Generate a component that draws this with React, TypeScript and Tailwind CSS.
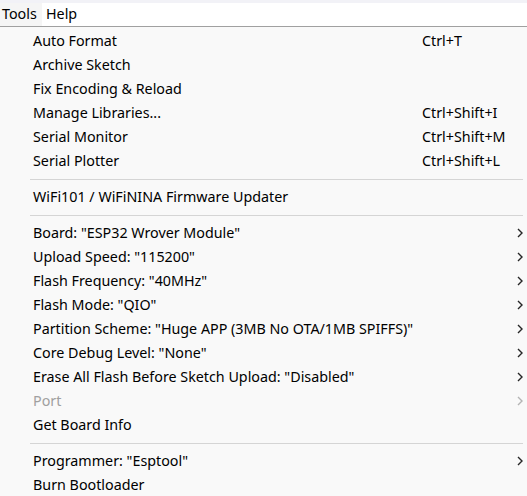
import React from "react";

type Item =
  | { type: "sep" }
  | { type: "item"; label: string; shortcut?: string; sub?: boolean; disabled?: boolean };

const items: Item[] = [
  { type: "item", label: "Auto Format", shortcut: "Ctrl+T" },
  { type: "item", label: "Archive Sketch" },
  { type: "item", label: "Fix Encoding & Reload" },
  { type: "item", label: "Manage Libraries...", shortcut: "Ctrl+Shift+I" },
  { type: "item", label: "Serial Monitor", shortcut: "Ctrl+Shift+M" },
  { type: "item", label: "Serial Plotter", shortcut: "Ctrl+Shift+L" },
  { type: "sep" },
  { type: "item", label: "WiFi101 / WiFiNINA Firmware Updater" },
  { type: "sep" },
  { type: "item", label: 'Board: "ESP32 Wrover Module"', sub: true },
  { type: "item", label: 'Upload Speed: "115200"', sub: true },
  { type: "item", label: 'Flash Frequency: "40MHz"', sub: true },
  { type: "item", label: 'Flash Mode: "QIO"', sub: true },
  { type: "item", label: 'Partition Scheme: "Huge APP (3MB No OTA/1MB SPIFFS)"', sub: true },
  { type: "item", label: 'Core Debug Level: "None"', sub: true },
  { type: "item", label: 'Erase All Flash Before Sketch Upload: "Disabled"', sub: true },
  { type: "item", label: "Port", sub: true, disabled: true },
  { type: "item", label: "Get Board Info" },
  { type: "sep" },
  { type: "item", label: 'Programmer: "Esptool"', sub: true },
  { type: "item", label: "Burn Bootloader" },
];

function Chevron({ disabled }: { disabled?: boolean }) {
  return (
    <svg width="6" height="10" viewBox="0 0 6 10" className="shrink-0">
      <path
        d="M1 1 L5 5 L1 9"
        fill="none"
        stroke={disabled ? "#b4b4b4" : "#262626"}
        strokeWidth="1.4"
      />
    </svg>
  );
}

export default function App() {
  return (
    <div
      className="w-[527px] h-[496px] overflow-hidden bg-[#f9f9f9] text-[14.3px] text-black"
      style={{ fontFamily: '"Noto Sans", "Open Sans", sans-serif' }}
    >
      <div className="h-[3px] bg-[#f2f2f7]" />
      <div className="h-[23px] bg-white flex items-center">
        <div className="h-full w-[42px] bg-[#f5f5f5] flex items-center pl-[2px] pb-px">Tools</div>
        <div className="pl-[4px] pb-px">Help</div>
      </div>
      <div className="h-px bg-[#a0a0a0]" />
      <div className="pt-[2px]">
        {items.map((it, i) =>
          it.type === "sep" ? (
            <div key={i} className="h-[12px] flex items-center pl-[30px] pr-[4px]">
              <div className="h-px w-full bg-[#d5d5d5]" />
            </div>
          ) : (
            <div key={i} className="h-[24px] flex items-center pl-[33px]">
              <div className={"flex-1 whitespace-nowrap " + (it.disabled ? "text-[#a0a0a0]" : "")}>
                {it.label}
              </div>
              <div className="w-[95px] whitespace-nowrap">{it.shortcut ?? ""}</div>
              <div className="w-[10px] flex items-center">
                {it.sub ? <Chevron disabled={it.disabled} /> : null}
              </div>
            </div>
          )
        )}
      </div>
    </div>
  );
}
